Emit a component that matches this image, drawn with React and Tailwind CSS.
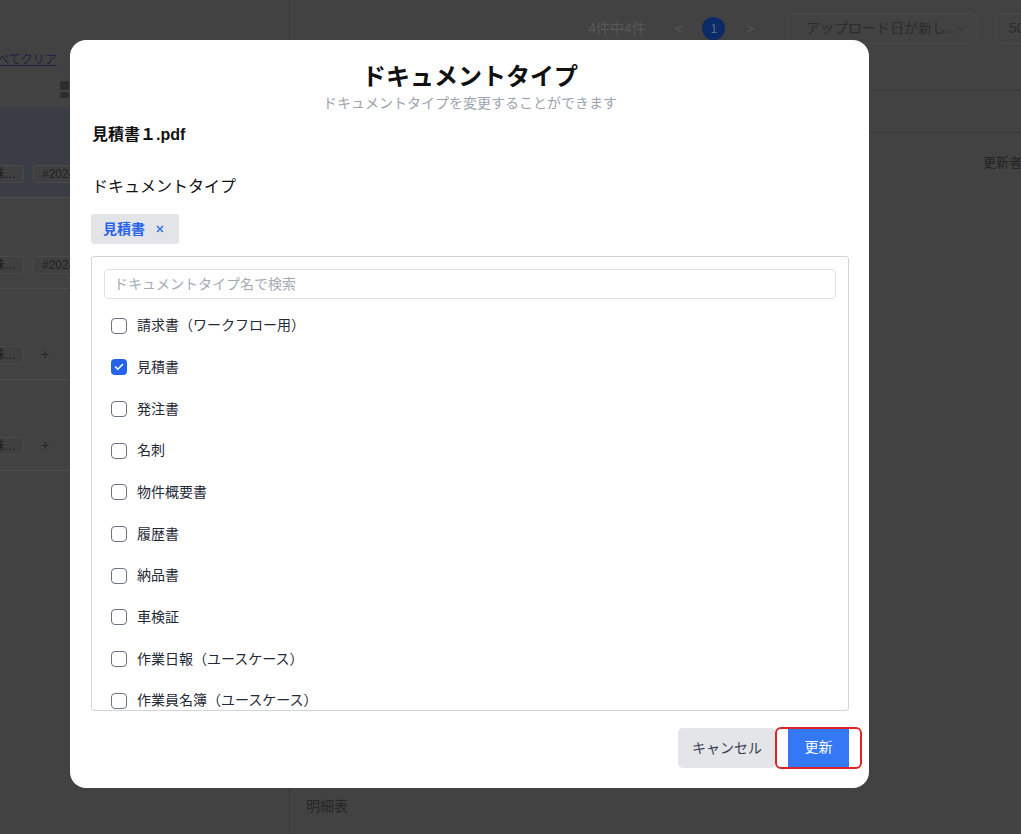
import React from "react";

const items = [
  "請求書（ワークフロー用）",
  "見積書",
  "発注書",
  "名刺",
  "物件概要書",
  "履歴書",
  "納品書",
  "車検証",
  "作業日報（ユースケース）",
  "作業員名簿（ユースケース）",
];

function Chip({ children }) {
  return (
    <div className="h-[18px] px-[8px] rounded-[3px] border border-[#4a4a4a] bg-[#404040] text-[12px] leading-[16px] text-[#202020] flex items-center whitespace-nowrap shrink-0">
      {children}
    </div>
  );
}

function LeftRow({ highlight, second }) {
  return (
    <div
      className={
        "h-[91px] border-b border-[#4c4c4c] flex items-end pb-[14px] " +
        (highlight ? "bg-[#3b3d46]" : "")
      }
    >
      <div className="flex items-center gap-[9px] -ml-[16px]">
        <Chip>味...</Chip>
        {second ? <Chip>#2024</Chip> : <span className="text-[#262626] text-[14px] pl-[8px] pr-[6px]">+</span>}
      </div>
    </div>
  );
}

export default function App() {
  return (
    <div className="relative w-[1021px] h-[834px] overflow-hidden bg-[#424242] font-['Liberation_Sans','Noto_Sans_CJK_JP',sans-serif]">
      {/* dimmed background page */}
      <div className="flex h-full">
        <div className="w-[290px] shrink-0 border-r border-[#393939] flex flex-col">
          <div className="h-[107px] flex flex-col">
            <div className="pt-[51px] -ml-[14px] text-[12px] leading-[18px] text-[#1c2440] underline whitespace-nowrap">すべてクリア</div>
            <div className="mt-[12px] ml-[60px] flex flex-col gap-[2px]">
              <div className="w-[9px] h-[9px] rounded-[2px] bg-[#2c2c2c]" />
              <div className="w-[9px] h-[6px] rounded-[2px] bg-[#2c2c2c]" />
            </div>
          </div>
          <LeftRow highlight second />
          <LeftRow second />
          <LeftRow />
          <LeftRow />
        </div>
        <div className="flex-1 flex flex-col min-w-0">
          <div className="h-[91px] border-b border-[#3a3a3a] flex items-start pt-[13px] justify-end">
            <div className="flex items-center -mr-[70px] shrink-0">
              <span className="text-[14px] text-[#585858] mr-[29px]">4件中4件</span>
              <span className="text-[13px] text-[#585858] mr-[20px]">&lt;</span>
              <span className="w-[23px] h-[23px] rounded-full bg-[#0b2a68] text-[#5d6a86] text-[12px] flex items-center justify-center mr-[21px]">1</span>
              <span className="text-[13px] text-[#585858] mr-[33px]">&gt;</span>
              <div className="w-[191px] h-[31px] rounded-[8px] border border-[#4a4a4a] flex items-center pl-[18px] text-[14px] text-[#2c2c2c] mr-[17px]">
                アップロード日が新し..
                <svg width="11" height="7" viewBox="0 0 11 7" className="ml-[2px]"><path d="M1 1l4.5 4.5L10 1" stroke="#3a3a3a" strokeWidth="1.2" fill="none" /></svg>
              </div>
              <div className="w-[96px] h-[31px] rounded-[8px] border border-[#4a4a4a] flex items-center pl-[13px] text-[14px] text-[#2c2c2c]">50</div>
            </div>
          </div>
          <div className="h-[42px] border-b border-[#3a3a3a]" />
          <div className="flex justify-end pt-[20px] -mr-[14px]">
            <span className="text-[13px] text-[#222] whitespace-nowrap">更新者名</span>
          </div>
          <div className="mt-auto pb-[17px] pl-[16px] text-[14px] text-[#262626]">明細表</div>
        </div>
      </div>

      {/* modal */}
      <div className="absolute left-[70px] top-[40px] w-[799px] h-[748px] bg-white rounded-[16px] flex flex-col pl-[21px] pr-[20px] pt-[21px] pb-[20px]">
        <h2 className="text-center text-[24px] leading-[32px] font-bold text-[#111]">ドキュメントタイプ</h2>
        <p className="text-center text-[14px] leading-[18px] text-[#9ca3af] mt-[1px]">ドキュメントタイプを変更することができます</p>
        <div className="mt-[11px] pl-[1px] text-[16px] leading-[24px] font-bold text-[#111]">見積書１.pdf</div>
        <div className="mt-[28px] pl-[1px] text-[16px] leading-[24px] text-[#111]">ドキュメントタイプ</div>
        <div className="mt-[15px] flex">
          <div className="h-[30px] pl-[12px] pr-[15px] bg-[#e3e4e8] rounded-[3px] flex items-center gap-[11px]">
            <span className="text-[14px] font-bold text-[#2563eb]">見積書</span>
            <svg width="8" height="8" viewBox="0 0 8 8"><path d="M1 1l6 6M7 1L1 7" stroke="#2563eb" strokeWidth="1.3" /></svg>
          </div>
        </div>
        <div className="mt-[12px] h-[455px] border border-[#d1d5db] rounded-[3px] overflow-hidden p-[12px] flex flex-col">
          <div className="h-[30px] shrink-0 border border-[#e0e2e6] rounded-[4px] flex items-center pl-[9px] text-[14px] text-[#a5abb5]">
            ドキュメントタイプ名で検索
          </div>
          <div className="mt-[6px] flex flex-col">
            {items.map((t) => {
              const checked = t === "見積書";
              return (
                <div key={t} className="h-[41.67px] shrink-0 flex items-center pl-[7px] gap-[10px]">
                  {checked ? (
                    <span className="w-[16px] h-[16px] rounded-[4px] bg-[#2563eb] flex items-center justify-center">
                      <svg width="10" height="8" viewBox="0 0 10 8"><path d="M1.5 4l2.3 2.3L8.5 1.5" stroke="white" strokeWidth="1.6" fill="none" strokeLinecap="round" strokeLinejoin="round" /></svg>
                    </span>
                  ) : (
                    <span className="w-[16px] h-[16px] rounded-[4px] border-[1.5px] border-[#6b7280] bg-white" />
                  )}
                  <span className="text-[14px] text-[#1f2937]">{t}</span>
                </div>
              );
            })}
          </div>
        </div>
        <div className="mt-auto flex justify-end gap-[12px]">
          <button className="w-[98px] h-[40px] rounded-[5px] bg-[#e4e5e9] text-[14px] text-[#374151]">キャンセル</button>
          <div className="relative">
            <button className="w-[61px] h-[39px] bg-[#3478f6] text-[14px] text-white">更新</button>
            <span className="absolute -top-[1px] -bottom-[1px] -left-[13px] -right-[13px] border-[2.5px] border-[#e02424] rounded-[6px]" />
          </div>
        </div>
      </div>
    </div>
  );
}
